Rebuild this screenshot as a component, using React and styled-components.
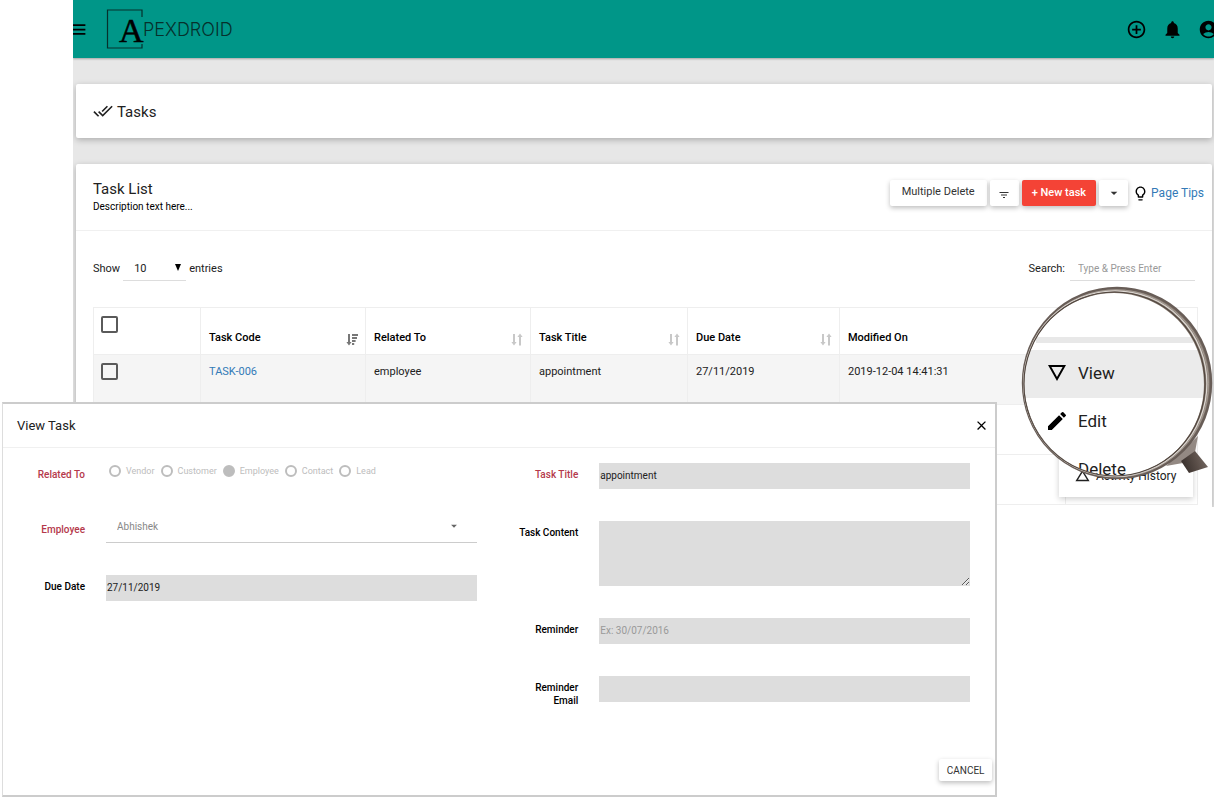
import React from 'react'
import styled, { createGlobalStyle } from 'styled-components';
import {
    MdMenu, MdAddCircleOutline, MdNotifications, MdAccountCircle, MdDoneAll,
    MdFilterList, MdArrowDropDown, MdLightbulbOutline, MdEdit,
    MdChangeHistory, MdClose
} from 'react-icons/md';

const columns = [
    { name: 'Task Code', sort: 'active' },
    { name: 'Related To', sort: 'both' },
    { name: 'Task Title', sort: 'both' },
    { name: 'Due Date', sort: 'both' },
    { name: 'Modified On' },
]

const relations = ['Vendor', 'Customer', 'Employee', 'Contact', 'Lead']

function Logo() {
    return (
        <LogoSvg width="130" height="42" viewBox="0 0 130 42" role="img" aria-label="Apexdroid">
            <path d="M36 9V2H1.5v38H36v-4" fill="none" stroke="#06302c" strokeWidth="1.2" />
            <text x="13" y="34" fontFamily="'Liberation Serif', serif" fontSize="34" stroke="#000" strokeWidth=".5">A</text>
            <text x="37" y="28" fontFamily="Inter, sans-serif" fontWeight="300" fontSize="18" fill="#06302c">PEXDROID</text>
        </LogoSvg>
    )
}

function SortIcon({ kind }) {
    if (kind === 'active') {
        return (
            <svg width="12" height="13" viewBox="0 0 12 13" fill="#777">
                <path d="M2 1h2v8h1.6L3 12.4.4 9H2zM6 1h6v2H6zM6 4h5v2H6zM6 7h3.6v2H6zM6 10h2.2v2H6z" />
            </svg>
        )
    }
    return (
        <svg width="12" height="13" viewBox="0 0 12 13" fill="#c8c8c8">
            <path d="M2 1h2v8h1.6L3 12.4.4 9H2zM8 12.4h2V4h1.6L9 .6 6.4 4H8z" />
        </svg>
    )
}

function ViewIcon() {
    return (
        <svg width="24" height="24" viewBox="0 0 24 24" fill="currentColor">
            <path d="M3 4l9 16 9-16H3zm3.380 2h11.250L12 16 6.380 6z" />
        </svg>
    )
}

function Magnifier() {
    return (
        <Glass>
            <Lens>
                <LensBar />
                <LensItem href="#view" $active><ViewIcon />View</LensItem>
                <LensItem href="#edit"><MdEdit size={24} />Edit</LensItem>
                <LensItem href="#delete"><i />Delete</LensItem>
            </Lens>
            <Rim width="194" height="194" viewBox="0 0 194 194">
                <defs>
                    <linearGradient id="handle" x1="0" y1="0.300" x2="1" y2="0">
                        <stop offset="0" stopColor="#3c332f" />
                        <stop offset=".5" stopColor="#5d514b" />
                        <stop offset="1" stopColor="#7b706a" />
                    </linearGradient>
                </defs>
                <path d="M146 180l17-3 12-11 3-16z" fill="#938983" />
                <path d="M161 175l8 12 19-6-13-16z" fill="url(#handle)" />
                <path
                    d="M97 2a94 95 0 1 0 .1 0zM94 7a90 91.500 0 1 1-.1 0z"
                    fill="#85796f" fillRule="evenodd"
                />
                <g fill="none">
                    <ellipse cx="97" cy="97" rx="94" ry="95" stroke="#685d57" strokeWidth="2.400" />
                    <ellipse cx="96" cy="97.400" rx="92.500" ry="93.600" stroke="#a59c95" strokeWidth="1" />
                    <ellipse cx="95.300" cy="97.600" rx="91.600" ry="92.800" stroke="#ddd8d3" strokeWidth="1.200" />
                    <ellipse cx="94.500" cy="98" rx="90.600" ry="92" stroke="#51463f" strokeWidth="1.200" />
                </g>
            </Rim>
        </Glass>
    )
}

function Field({ label, id, required, low, children }) {
    return (
        <FieldRow>
            <Label htmlFor={id} $required={required} $low={low}>{label}</Label>
            {children}
        </FieldRow>
    )
}

function ViewTask() {
    return (
        <Dialog role="dialog" aria-labelledby="view-task">
            <DialogHead>
                <DialogTitle id="view-task">View Task</DialogTitle>
                <CloseButton aria-label="Close"><MdClose size={15} /></CloseButton>
            </DialogHead>
            <DialogBody>
                <FieldColumn>
                    <FieldRow as="fieldset">
                        <Label as="span" $required>Related To</Label>
                        <Radios>
                            {relations.map((name) =>
                                <RadioLabel key={name}>
                                    <Radio type="radio" name="related" disabled defaultChecked={name === 'Employee'} />
                                    {name}
                                </RadioLabel>
                            )}
                        </Radios>
                    </FieldRow>
                    <Field label="Employee" id="employee" required low>
                        <SelectWrap>
                            <EmployeeSelect id="employee"><option>Abhishek</option></EmployeeSelect>
                            <MdArrowDropDown size={14} />
                        </SelectWrap>
                    </Field>
                    <Field label="Due Date" id="due"><Input id="due" defaultValue="27/11/2019" /></Field>
                </FieldColumn>
                <FieldColumn>
                    <Field label="Task Title" id="title" required><Input id="title" defaultValue="appointment" /></Field>
                    <Field label="Task Content" id="content"><TextArea id="content" /></Field>
                    <Field label="Reminder" id="reminder"><Input id="reminder" placeholder="Ex: 30/07/2016" /></Field>
                    <Field label="Reminder Email" id="email"><Input id="email" /></Field>
                </FieldColumn>
            </DialogBody>
            <DialogFoot>
                <CancelButton>CANCEL</CancelButton>
            </DialogFoot>
        </Dialog>
    )
}

function App() {
    return (
        <Page>
            <GlobalStyle />
            <Frame>
                <TopBar>
                    <MenuButton aria-label="Menu"><MdMenu size={21} /></MenuButton>
                    <Logo />
                    <TopActions>
                        <IconButton aria-label="Add"><MdAddCircleOutline size={21} /></IconButton>
                        <IconButton aria-label="Notifications"><MdNotifications size={21} /></IconButton>
                        <IconButton aria-label="Account"><MdAccountCircle size={21} /></IconButton>
                    </TopActions>
                </TopBar>
                <Content>
                    <TitleCard>
                        <MdDoneAll size={20} />
                        <h1>Tasks</h1>
                    </TitleCard>
                    <Card>
                        <CardHead>
                            <div>
                                <h2>Task List</h2>
                                <p>Description text here...</p>
                            </div>
                            <Toolbar>
                                <Button $wide>Multiple Delete</Button>
                                <Button aria-label="Filter" $icon><MdFilterList size={12} /></Button>
                                <Button $primary>+ New task</Button>
                                <Button aria-label="More"><MdArrowDropDown size={16} /></Button>
                                <Tips href="#tips"><MdLightbulbOutline size={17} />Page Tips</Tips>
                            </Toolbar>
                        </CardHead>
                        <ListControls>
                            <label htmlFor="entries">Show</label>
                            <EntriesWrap>
                                <EntriesSelect id="entries"><option>10</option></EntriesSelect>
                                <svg width="6" height="7" viewBox="0 0 6 7"><path d="M0 0h6L3 7z" /></svg>
                            </EntriesWrap>
                            <span>entries</span>
                            <SearchLabel>
                                Search:
                                <Search placeholder="Type & Press Enter" />
                            </SearchLabel>
                        </ListControls>
                        <Table>
                            <colgroup>
                                <Col $width={107} />
                                <Col $width={165} />
                                <Col $width={165} />
                                <Col $width={157} />
                                <Col $width={152} />
                                <col />
                                <Col $width={132} />
                            </colgroup>
                            <thead>
                                <tr>
                                    <th><Checkbox type="checkbox" aria-label="Select all" /></th>
                                    {columns.map((item) =>
                                        <th key={item.name}>
                                            <HeadCell>
                                                {item.name}
                                                {item.sort && <SortIcon kind={item.sort} />}
                                            </HeadCell>
                                        </th>
                                    )}
                                    <th />
                                </tr>
                            </thead>
                            <tbody>
                                <Row $shaded>
                                    <td><Checkbox type="checkbox" aria-label="Select TASK-006" /></td>
                                    <td><a href="#task-006">TASK-006</a></td>
                                    <td>employee</td>
                                    <td>appointment</td>
                                    <td>27/11/2019</td>
                                    <td>2019-12-04 14:41:31</td>
                                    <td />
                                </Row>
                                <Row><td colSpan="7" /></Row>
                                <Row>
                                    <td colSpan="6" />
                                    <td />
                                </Row>
                            </tbody>
                        </Table>
                    </Card>
                </Content>
                <RowMenu>
                    <a href="#history"><MdChangeHistory size={17} />Activity History</a>
                </RowMenu>
            </Frame>
            <ViewTask />
            <Magnifier />
        </Page>
    )
}

const GlobalStyle = createGlobalStyle`
* {
    box-sizing: border-box;
}

body {
    margin: 0;
    background: #fff;
    color: #212121;
    font-family: Roboto, sans-serif;
    font-size: 11px;
}

h1, h2, p {
    margin: 0;
    font-weight: 400;
}

button, input, select, textarea {
    font-family: inherit;
    color: inherit;
    border: none;
    border-radius: 0;
    outline: none;
}

button {
    padding: 0;
    background: none;
    cursor: pointer;
}

a {
    color: #337ab7;
    text-decoration: none;
}
`;

const Page = styled.div`
position: relative;
overflow: hidden;
min-height: 100vh;
`;

const Frame = styled.div`
position: relative;
margin-left: 73px;
overflow: hidden;
background: #e7e7e7;
`;

const TopBar = styled.header`
display: flex;
align-items: center;
height: 58px;
background: #009688;
color: #000;
box-shadow: 0 1px 2px rgba(0, 0, 0, 0.3);
`;

const IconButton = styled.button`
display: flex;
`;

const MenuButton = styled(IconButton)`
margin-left: -6px;
`;

const LogoSvg = styled.svg`
margin-left: 18px;
`;

const TopActions = styled.div`
display: flex;
gap: 15px;
margin-left: auto;
margin-right: -5px;
`;

const Content = styled.main`
display: flex;
flex-direction: column;
gap: 26px;
padding: 26px 2px 0 3px;
`;

const Card = styled.section`
background: #fff;
border-radius: 2px 2px 0 0;
padding-bottom: 2px;
box-shadow: 0 2px 6px rgba(0, 0, 0, 0.25);
`;

const TitleCard = styled(Card)`
display: flex;
align-items: center;
gap: 4px;
height: 54px;
padding: 2px 17px 0;
border-radius: 2px;

svg {
    margin-bottom: 2px;
}

h1 {
    font-size: 15px;
}
`;

const CardHead = styled.div`
display: flex;
justify-content: space-between;
align-items: flex-start;
height: 67px;
padding: 16px 8px 0 17px;
border-bottom: 1px solid #f0f0f0;

h2 {
    font-size: 15px;
    line-height: 18px;
}

p {
    font-size: 10px;
    line-height: 17px;
    color: #000;
}
`;

const Toolbar = styled.div`
display: flex;
align-items: center;
gap: 3px;
`;

const Button = styled.button`
display: flex;
justify-content: center;
align-items: center;
min-width: 29px;
height: 26px;
padding: ${(props) => props.$wide ? '0 12px 4px' : props.$primary ? '0 10px 1px' : props.$icon ? '3px 0 0' : '0'};
border-radius: 2px;
background: ${(props) => props.$primary ? '#f44336' : '#fff'};
color: ${(props) => props.$primary ? '#fff' : '#333'};
font-size: 11px;
font-weight: ${(props) => props.$primary ? 500 : 400};
box-shadow: 0 2px 5px rgba(0, 0, 0, 0.26);
`;

const Tips = styled.a`
display: flex;
align-items: center;
gap: 2px;
margin-left: 1px;
font-size: 12px;

svg {
    color: #000;
}
`;

const ListControls = styled.div`
display: flex;
align-items: center;
height: 26px;
margin: 24px 17px 26px;
`;

const EntriesWrap = styled.div`
display: flex;
align-items: center;
width: 63px;
height: 26px;
margin: 0 3px;
padding-right: 5px;
border-bottom: 1px solid #ddd;
`;

const EntriesSelect = styled.select`
flex: 1;
appearance: none;
height: 24px;
padding: 1px 0 0 11px;
background: none;
font-size: 11px;
`;

const SearchLabel = styled.label`
display: flex;
align-items: center;
gap: 5px;
margin-left: auto;
`;

const Search = styled.input`
width: 125px;
height: 26px;
padding: 2px 8px 0;
border-bottom: 1px solid #ddd;
font-size: 10px;

&::placeholder {
    color: #999;
}
`;

const Col = styled.col`
width: ${(props) => props.$width}px;
`;

const Table = styled.table`
width: calc(100% - 31px);
margin: 0 14px 0 17px;
table-layout: fixed;
border-collapse: collapse;

th, td {
    padding: 8px;
    border: 1px solid #eee;
    text-align: left;
    vertical-align: top;
}

th:first-child, td:first-child {
    padding-left: 7px;
}

th {
    height: 47px;
    color: #000;
    font-weight: 500;
}

td {
    line-height: 17px;
}
`;

const HeadCell = styled.div`
display: flex;
justify-content: space-between;
align-items: flex-start;
padding-top: 15px;

svg {
    margin: 2px -1px 0 0;
}
`;

const Row = styled.tr`
height: 50px;
background: ${(props) => props.$shaded ? '#f5f5f5' : '#fff'};
`;

const Checkbox = styled.input`
display: block;
appearance: none;
width: 17px;
height: 17px;
margin: 0;
border: 2px solid #5a5a5a;
border-radius: 2px;
`;

const RowMenu = styled.nav`
position: absolute;
right: 21px;
bottom: 10px;
width: 134px;
height: 110px;
display: flex;
align-items: flex-end;
background: #fff;
box-shadow: 0 2px 6px rgba(0, 0, 0, 0.2);

a {
    display: flex;
    align-items: center;
    gap: 5px;
    padding: 0 15px 13px;
    color: #212121;
    font-size: 12px;
}
`;

const Glass = styled.div`
position: absolute;
top: 286px;
right: 0;
width: 194px;
height: 194px;
`;

const Lens = styled.div`
position: absolute;
inset: 5px 9px 3px 4px;
overflow: hidden;
border-radius: 50%;
background: #fff;
`;

const LensBar = styled.div`
height: 6px;
margin: 46px 12px 7px;
background: #e8e8e8;
`;

const LensItem = styled.a`
display: flex;
align-items: center;
gap: 9px;
height: 48px;
padding: 0 0 2px 21px;
background: ${(props) => props.$active ? '#ebebeb' : '#fff'};
color: #212121;
font-size: 17px;

svg, i {
    width: 24px;
    color: #000;
}
`;

const Rim = styled.svg`
position: absolute;
inset: 0;
`;

const Dialog = styled.section`
position: absolute;
top: 402px;
left: 2px;
width: 82%;
border: 2px solid #ccc;
border-left: 1px solid #ddd;
background: #fff;
`;

const DialogHead = styled.header`
display: flex;
justify-content: space-between;
align-items: center;
height: 44px;
padding: 0 6px 0 14px;
border-bottom: 1px solid #f0f0f0;
`;

const DialogTitle = styled.h2`
font-size: 13px;
`;

const CloseButton = styled(IconButton)`
color: #000;
`;

const DialogBody = styled.form`
display: grid;
grid-template-columns: 1fr 1fr;
padding: 15px 6px 0 0;
`;

const FieldColumn = styled.div`
display: flex;
flex-direction: column;
gap: 32px;
`;

const FieldRow = styled.div`
display: grid;
grid-template-columns: 82px 1fr;
gap: 21px;
align-items: start;
min-width: 0;
margin: 0;
padding: 0 19px 0 0;
border: none;
`;

const Label = styled.label`
padding-top: ${(props) => props.$low ? 10 : 5}px;
padding-left: 20px;
color: ${(props) => props.$required ? '#b5394b' : '#000'};
font-size: 10px;
font-weight: 500;
line-height: 13px;
text-align: right;
`;

const Radios = styled.div`
display: flex;
gap: 6px;
padding-left: 3px;
`;

const RadioLabel = styled.label`
display: flex;
align-items: center;
gap: 5px;
height: 16px;
color: #bdbdbd;
font-size: 9px;
`;

const Radio = styled.input`
appearance: none;
width: 12px;
height: 12px;
margin: 0;
border: 2px solid #bdbdbd;
border-radius: 50%;

&:checked {
    background: #bdbdbd;
}
`;

const SelectWrap = styled.div`
display: flex;
align-items: center;
height: 30px;
padding-right: 16px;
padding-bottom: 3px;
border-bottom: 1px solid #ccc;
color: #666;
`;

const EmployeeSelect = styled.select`
flex: 1;
appearance: none;
padding: 0 0 0 11px;
background: none;
color: #888;
font-size: 10px;
`;

const Input = styled.input`
width: 100%;
height: 26px;
padding: 0 1px 2px;
background: #ddd;
font-size: 10px;

&::placeholder {
    color: #999;
}
`;

const TextArea = styled.textarea`
display: block;
width: 100%;
height: 65px;
background: #ddd;
font-size: 10px;
resize: vertical;
`;

const DialogFoot = styled.footer`
display: flex;
justify-content: flex-end;
padding: 52px 3px 14px;
`;

const CancelButton = styled(Button)`
height: 22px;
padding: 0 8px;
font-size: 10px;
`;

export default App
